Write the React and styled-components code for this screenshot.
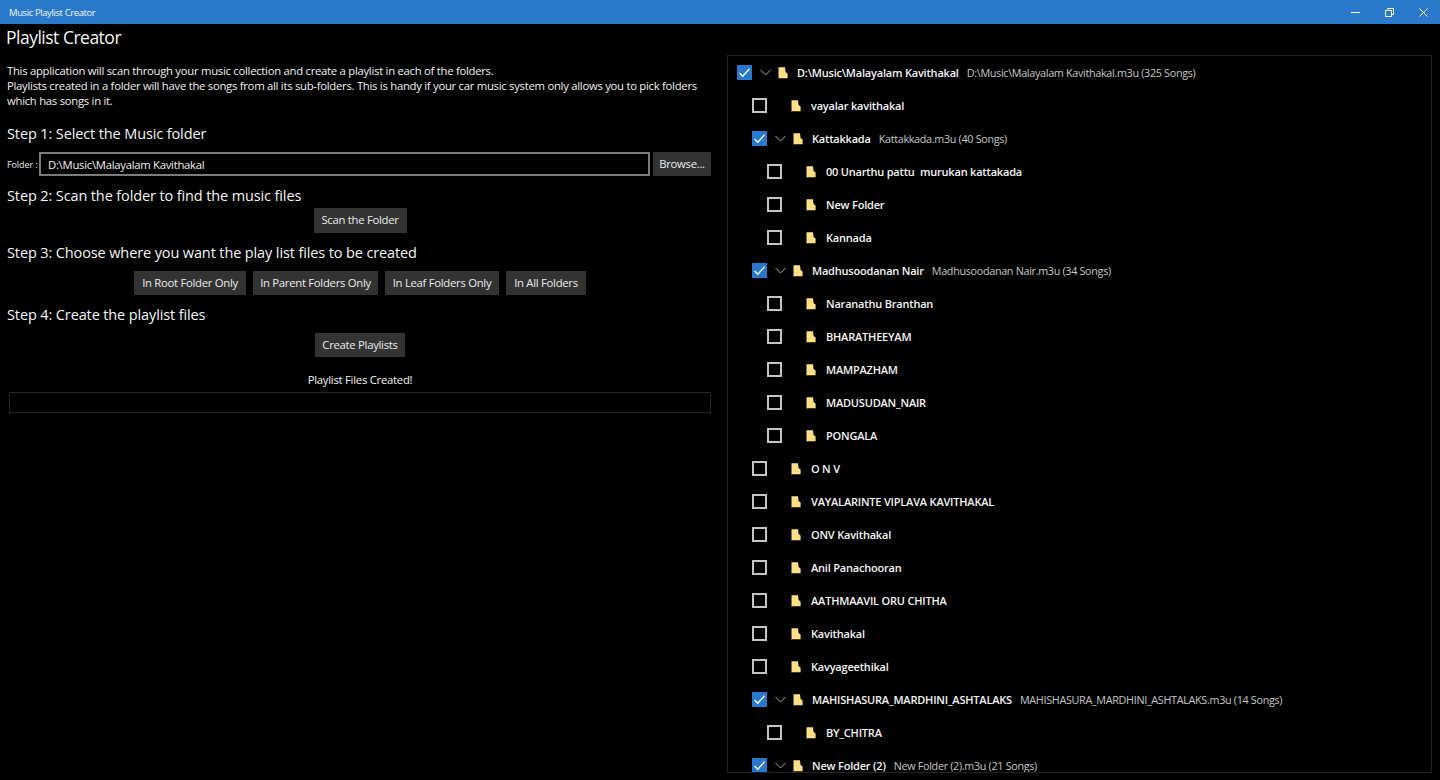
import styled, { createGlobalStyle } from 'styled-components';

const GlobalStyle = createGlobalStyle`
    html, body {
        margin: 0;
        height: 100%;
        background: #000;
    }
    body {
        font-family: "Open Sans", "Noto Sans", sans-serif;
        color: #fff;
        overflow: hidden;
    }
`;

const treeItems = [
    { level: 0, name: 'D:\\Music\\Malayalam Kavithakal', info: 'D:\\Music\\Malayalam Kavithakal.m3u (325 Songs)', checked: true },
    { level: 1, name: 'vayalar kavithakal' },
    { level: 1, name: 'Kattakkada', info: 'Kattakkada.m3u (40 Songs)', checked: true },
    { level: 2, name: '00 Unarthu pattu  murukan kattakada' },
    { level: 2, name: 'New Folder' },
    { level: 2, name: 'Kannada' },
    { level: 1, name: 'Madhusoodanan Nair', info: 'Madhusoodanan Nair.m3u (34 Songs)', checked: true },
    { level: 2, name: 'Naranathu Branthan' },
    { level: 2, name: 'BHARATHEEYAM' },
    { level: 2, name: 'MAMPAZHAM' },
    { level: 2, name: 'MADUSUDAN_NAIR' },
    { level: 2, name: 'PONGALA' },
    { level: 1, name: 'O N V' },
    { level: 1, name: 'VAYALARINTE VIPLAVA KAVITHAKAL' },
    { level: 1, name: 'ONV Kavithakal' },
    { level: 1, name: 'Anil Panachooran' },
    { level: 1, name: 'AATHMAAVIL ORU CHITHA' },
    { level: 1, name: 'Kavithakal' },
    { level: 1, name: 'Kavyageethikal' },
    { level: 1, name: 'MAHISHASURA_MARDHINI_ASHTALAKS', info: 'MAHISHASURA_MARDHINI_ASHTALAKS.m3u (14 Songs)', checked: true },
    { level: 2, name: 'BY_CHITRA' },
    { level: 1, name: 'New Folder (2)', info: 'New Folder (2).m3u (21 Songs)', checked: true },
];

const FolderIcon = () => (
    <svg width="10" height="12" viewBox="0 0 10 12">
        <path d="M0.5 0.3H7L7.6 5L9.6 6.5V11.2H1.4L0.5 11.8Z" fill="#fddf85" />
    </svg>
);

const Chevron = () => (
    <svg width="11" height="7" viewBox="0 0 11 7">
        <path d="M0.5 1L5.5 6L10.5 1" fill="none" stroke="#a8a8a8" strokeWidth="1" />
    </svg>
);

const Tick = () => (
    <svg width="15" height="15" viewBox="0 0 15 15">
        <path d="M2.5 8L5.8 11.2L12.5 3.8" fill="none" stroke="#fff" strokeWidth="1.3" />
    </svg>
);

const App = () => {
    return (
        <Window>
            <GlobalStyle />
            <TitleBar>
                <AppName>Music Playlist Creator</AppName>
                <WindowControls>
                    <WindowButton aria-label="Minimize">
                        <svg width="9" height="9" viewBox="0 0 9 9"><path d="M0 4.5H9" stroke="#fff" fill="none" /></svg>
                    </WindowButton>
                    <WindowButton aria-label="Restore">
                        <svg width="9" height="9" viewBox="0 0 9 9"><path d="M0.5 2.5H6.5V8.5H0.5ZM2.5 2.5V0.5H8.5V6.5H6.5" stroke="#fff" fill="none" /></svg>
                    </WindowButton>
                    <WindowButton aria-label="Close">
                        <svg width="9" height="9" viewBox="0 0 9 9"><path d="M0.5 0.5L8.5 8.5M8.5 0.5L0.5 8.5" stroke="#fff" fill="none" /></svg>
                    </WindowButton>
                </WindowControls>
            </TitleBar>
            <Main>
                <LeftColumn>
                    <PageTitle>Playlist Creator</PageTitle>
                    <Intro>
                        This application will scan through your music collection and create a playlist in each of the folders.<br />
                        Playlists created in a folder will have the songs from all its sub-folders. This is handy if your car music system only allows you to pick folders<br />
                        which has songs in it.
                    </Intro>
                    <StepHeading $top={16}>Step 1: Select the Music folder</StepHeading>
                    <FolderRow>
                        <FolderLabel>Folder :</FolderLabel>
                        <FolderInput readOnly value="D:\Music\Malayalam Kavithakal" />
                        <Button $width={58}>Browse...</Button>
                    </FolderRow>
                    <StepHeading $top={10}>Step 2: Scan the folder to find the music files</StepHeading>
                    <ButtonRow $top={1}>
                        <Button $width={93} $height={25}>Scan the Folder</Button>
                    </ButtonRow>
                    <StepHeading $top={10}>Step 3: Choose where you want the play list files to be created</StepHeading>
                    <ButtonRow $top={7}>
                        <Button $width={112}>In Root Folder Only</Button>
                        <Button $width={125}>In Parent Folders Only</Button>
                        <Button $width={114}>In Leaf Folders Only</Button>
                        <Button $width={80}>In All Folders</Button>
                    </ButtonRow>
                    <StepHeading $top={10}>Step 4: Create the playlist files</StepHeading>
                    <ButtonRow $top={7}>
                        <Button $width={90}>Create Playlists</Button>
                    </ButtonRow>
                    <Status>Playlist Files Created!</Status>
                    <ProgressTrack />
                </LeftColumn>
                <TreePanel>
                    {treeItems.map((item) => (
                        <TreeRow key={item.name} $level={item.level}>
                            <CheckBox $checked={item.checked}>{item.checked && <Tick />}</CheckBox>
                            <ChevronSlot $empty={!item.info}>{item.info && <Chevron />}</ChevronSlot>
                            <FolderSlot $leaf={!item.info}><FolderIcon /></FolderSlot>
                            <RowName>{item.name}</RowName>
                            {item.info && <RowInfo>{item.info}</RowInfo>}
                        </TreeRow>
                    ))}
                </TreePanel>
            </Main>
        </Window>
    );
};

const Window = styled.div`
    height: 780px;
    display: flex;
    flex-direction: column;
    overflow: hidden;
    background: #000;
`;

const TitleBar = styled.header`
    height: 24px;
    flex: none;
    background: #2b79cc;
    display: flex;
    align-items: center;
    justify-content: space-between;
    padding-left: 9px;
`;

const AppName = styled.span`
    font-size: 9.5px;
    letter-spacing: -0.4px;
    color: #f2f7fc;
`;

const WindowControls = styled.div`
    display: flex;
    height: 100%;
`;

const WindowButton = styled.div`
    width: 34px;
    height: 100%;
    display: flex;
    align-items: center;
    justify-content: center;
`;

const Main = styled.main`
    flex: 1;
    min-height: 0;
    display: flex;
    align-items: flex-start;
`;

const LeftColumn = styled.section`
    width: 711px;
    flex: none;
    display: flex;
    flex-direction: column;
    padding-left: 6px;
    box-sizing: border-box;
`;

const PageTitle = styled.h1`
    margin: 0;
    height: 26px;
    line-height: 26px;
    font-size: 17.5px;
    font-weight: 400;
    letter-spacing: -0.5px;
    color: #f4f4f4;
`;

const Intro = styled.p`
    margin: 13px 0 0 1px;
    font-size: 11.3px;
    line-height: 15px;
    letter-spacing: -0.27px;
    color: #f0f0f0;
    white-space: nowrap;
`;

const StepHeading = styled.h2`
    margin: ${(p) => p.$top}px 0 0 1px;
    height: 21px;
    line-height: 19px;
    font-size: 14.5px;
    font-weight: 400;
    letter-spacing: -0.12px;
    color: #f4f4f4;
    white-space: nowrap;
`;

const FolderRow = styled.div`
    display: flex;
    align-items: center;
    margin-top: 7px;
    padding-left: 1px;
`;

const FolderLabel = styled.label`
    width: 32px;
    flex: none;
    font-size: 9px;
    letter-spacing: -0.1px;
    color: #e8e8e8;
`;

const FolderInput = styled.input`
    flex: 1;
    min-width: 0;
    height: 24px;
    margin-right: 3px;
    padding: 0 7px;
    box-sizing: border-box;
    background: #000;
    border: 2px solid #7c7c7c;
    outline: none;
    font-family: inherit;
    font-size: 11.3px;
    letter-spacing: -0.27px;
    color: #f0f0f0;
`;

const ButtonRow = styled.div`
    display: flex;
    justify-content: center;
    gap: 7px;
    margin-top: ${(p) => p.$top}px;
    padding-left: 3px;
`;

const Button = styled.button`
    width: ${(p) => p.$width}px;
    height: ${(p) => p.$height || 24}px;
    padding: 0 0 2px;
    flex: none;
    border: none;
    background: #333;
    font-family: inherit;
    font-size: 11.3px;
    letter-spacing: -0.28px;
    color: #ececec;
    white-space: nowrap;
`;

const Status = styled.div`
    margin-top: 15px;
    padding-left: 3px;
    height: 17px;
    line-height: 15px;
    text-align: center;
    font-size: 11.3px;
    letter-spacing: -0.25px;
    color: #f0f0f0;
`;

const ProgressTrack = styled.div`
    height: 21px;
    margin: 3px 0 0 3px;
    box-sizing: border-box;
    border: 1px solid #262626;
`;

const TreePanel = styled.section`
    width: 705px;
    height: 718px;
    margin: 31px 0 0 16px;
    flex: none;
    box-sizing: border-box;
    border: 1px solid #222;
    overflow: hidden;
`;

const TreeRow = styled.div`
    height: 33px;
    display: flex;
    align-items: center;
    padding-left: ${(p) => 9 + p.$level * 15}px;
    white-space: nowrap;
`;

const CheckBox = styled.div`
    width: 15px;
    height: 15px;
    flex: none;
    box-sizing: border-box;
    border: ${(p) => (p.$checked ? 'none' : '2px solid #c4c4c4')};
    background: ${(p) => (p.$checked ? '#2b79cc' : 'transparent')};
    display: flex;
`;

const ChevronSlot = styled.div`
    width: ${(p) => (p.$empty ? 9 : 11)}px;
    flex: none;
    margin-left: 8px;
    display: flex;
`;

const FolderSlot = styled.div`
    flex: none;
    display: flex;
    margin-left: 7px;
    margin-right: ${(p) => (p.$leaf ? 10 : 9)}px;
`;

const RowName = styled.span`
    font-size: 11px;
    font-weight: 600;
    letter-spacing: -0.2px;
    color: #f4f4f4;
    white-space: pre;
`;

const RowInfo = styled.span`
    margin-left: 8px;
    font-size: 10.8px;
    letter-spacing: -0.32px;
    color: #c6c6c6;
`;

export default App;
